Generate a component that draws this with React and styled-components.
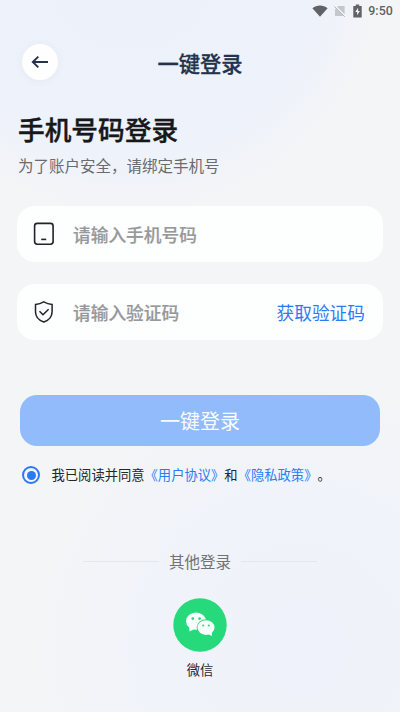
import React, { useState } from 'react'
import styled, { createGlobalStyle } from 'styled-components'

const GlobalStyle = createGlobalStyle`
    * {
        box-sizing: border-box;
    }

    body {
        margin: 0;
        font-family: 'Noto Sans CJK SC', sans-serif;
        text-spacing-trim: space-all;
    }

    button, input {
        border: 0;
        padding: 0;
        background: none;
        font-family: inherit;
    }
`

const Page = styled.main`
    height: 712px;
    overflow: hidden;
    display: flex;
    flex-direction: column;
    background:
        radial-gradient(circle at 130px -40px, #edf2fa 0, #eef2fa 200px, rgba(240, 243, 249, 0) 255px),
        radial-gradient(circle at 300px 650px, #eff2fa 0, #f0f3fa 150px, rgba(241, 243, 249, 0) 270px),
        #f4f5f7;
`

const StatusBar = styled.div`
    height: 22px;
    padding-right: 7px;
    display: flex;
    align-items: center;
    justify-content: flex-end;
`

const StatusIcon = styled.svg`
    display: block;
    margin-right: ${props => props.$gap}px;
`

const Clock = styled.span`
    font: 500 12.4px/22px Roboto, sans-serif;
    letter-spacing: 0.1px;
    color: #606266;
`

const Header = styled.header`
    height: 84px;
    padding: 0 22px;
    display: grid;
    grid-template-columns: 36px 1fr 36px;
    align-items: center;
`

const BackButton = styled.button`
    width: 36px;
    height: 36px;
    margin-bottom: 5px;
    border-radius: 50%;
    display: flex;
    align-items: center;
    justify-content: center;
    background: #fefefe;
    box-shadow: 0 1px 8px rgba(90, 90, 80, 0.06);
`

const Title = styled.h1`
    margin: 0 0 2px;
    text-align: center;
    font-size: 21.3px;
    font-weight: 500;
    line-height: 30px;
    color: #24324b;
    -webkit-text-stroke: 0.3px #24324b;
`

const Intro = styled.section`
    height: 99.5px;
    padding: 5px 18px 0;
`

const Heading = styled.h2`
    margin: 0;
    font-size: 26.7px;
    font-weight: 500;
    line-height: 36px;
    color: #17181a;
    -webkit-text-stroke: 0.4px #17181a;
`

const Hint = styled.p`
    margin: 8px 0 0;
    font-size: 15.5px;
    line-height: 20px;
    color: #696b70;
`

const Fields = styled.div`
    padding: 0 17px;
    display: flex;
    flex-direction: column;
    gap: 22px;
`

const Field = styled.label`
    height: 56px;
    padding: 0 18px 0 16px;
    display: flex;
    align-items: center;
    border-radius: 18px;
    background: #fdfefe;
`

const Input = styled.input`
    flex: 1;
    min-width: 0;
    height: 30px;
    margin-left: 18px;
    outline: none;
    font-size: 17.7px;
    font-weight: 500;
    color: #222;

    &::placeholder {
        color: #97989b;
        opacity: 1;
        -webkit-text-stroke: 0.2px #97989b;
    }
`

const CodeButton = styled.button`
    font-size: 17.7px;
    line-height: 26px;
    color: #2b7cf3;
`

const LoginButton = styled.button`
    height: 51px;
    margin: 55.5px 20px 0;
    border-radius: 17px;
    background: #91bbfb;
    color: #fafcff;
    font-size: 20px;
    line-height: 50px;
`

const Agreement = styled.div`
    height: 20px;
    margin: 19px 22px 0;
    display: flex;
    align-items: center;
    font-size: 13.3px;
    line-height: 20px;
    color: #25272b;
    white-space: nowrap;
`

const Radio = styled.button`
    width: 18px;
    height: 18px;
    margin: 0 11.5px 0 0;
    border: 2.5px solid #2b7af2;
    border-radius: 50%;
    display: flex;
    align-items: center;
    justify-content: center;

    &::after {
        content: '';
        width: 9px;
        height: 9px;
        border-radius: 50%;
        background: ${props => (props.$checked ? '#2b7af2' : 'transparent')};
    }
`

const Link = styled.span`
    color: #2b7cf3;
`

const Divider = styled.div`
    margin: 66px 83px 0;
    display: flex;
    align-items: center;
    gap: 10px;
    font-size: 15.5px;
    line-height: 20px;
    color: #707276;

    &::before,
    &::after {
        content: '';
        flex: 1;
        height: 1px;
        background: #e5e7ec;
    }
`

const WechatLogin = styled.button`
    align-self: center;
    margin-top: 26.5px;
    display: flex;
    flex-direction: column;
    align-items: center;
    gap: 8px;
    font-size: 13.3px;
    line-height: 20px;
    color: #25272b;
`

const WechatLogo = styled.svg`
    width: 54px;
    height: 54px;
    display: block;
`

const PhoneIcon = () => (
    <svg width="22" height="24" viewBox="0 0 22 24" fill="none" stroke="#222326" strokeWidth="1.6">
        <rect x="1.6" y="1.4" width="18.5" height="20.8" rx="2.6" />
        <path d="M8.2 17.4h5" />
    </svg>
)

const ShieldIcon = () => (
    <svg width="22" height="24" viewBox="0 0 22 24" fill="none" stroke="#222326" strokeWidth="1.5">
        <path d="M10.8 1.9C13.4 3.4 16 4.2 19.1 4.4V11.8C19.1 17 15.6 20.4 10.8 22C6 20.4 2.5 17 2.5 11.8V4.4C5.6 4.2 8.2 3.4 10.8 1.9Z" />
        <path d="M6.5 11.3L10 14.8L15.6 9.2" />
    </svg>
)

const StatusIcons = () => (
    <>
        <StatusIcon $gap={6} width="16" height="12" viewBox="0 0 16 12" fill="#606266">
            <path d="M.4 3.3C5-.3 11-.3 15.6 3.3L8 11.8Z" />
        </StatusIcon>
        <StatusIcon $gap={7} width="12" height="12" viewBox="0 0 12 12">
            <path d="M4.2 1H10.6V11H1V4.2Z" fill="#c5c7ca" />
            <path d="M.8 1L11.4 11.5" stroke="#f1f4f8" strokeWidth="2" />
            <path d="M.3 1.4L10.7 11.8" stroke="#b0b2b5" strokeWidth="1" />
        </StatusIcon>
        <StatusIcon $gap={6} width="9" height="14" viewBox="0 0 9 14">
            <path d="M.3 2H2.8V.6H6.2V2H8.7V13.4H.3Z" fill="#606266" />
            <path d="M5.1 3.7L2.2 8H4.1V11.2L6.9 6.9H5.1Z" fill="#f1f4f8" />
        </StatusIcon>
    </>
)

const WechatIcon = () => (
    <WechatLogo viewBox="0 0 54 54">
        <circle cx="27" cy="27" r="26.7" fill="#26d97b" />
        <g fill="#fcfffd">
            <ellipse cx="23" cy="23.2" rx="10" ry="8.6" />
            <path d="M16.2 28L16.4 33.6L22 30.8Z" />
        </g>
        <ellipse cx="33" cy="29.6" rx="9.4" ry="8.3" fill="#26d97b" />
        <g fill="#fcfffd">
            <ellipse cx="33" cy="29.6" rx="8.5" ry="7.4" />
            <path d="M34.2 35.8L39 38L38.8 33.6Z" />
        </g>
        <g fill="#26d97b">
            <circle cx="19.8" cy="20.6" r="1.4" />
            <circle cx="26.6" cy="20.6" r="1.4" />
            <circle cx="30.2" cy="27.5" r="1.1" />
            <circle cx="35.8" cy="27.5" r="1.1" />
        </g>
    </WechatLogo>
)

export default function App() {
    const [agreed, setAgreed] = useState(true)

    return (
        <Page>
            <GlobalStyle />
            <StatusBar>
                <StatusIcons />
                <Clock>9:50</Clock>
            </StatusBar>
            <Header>
                <BackButton aria-label="返回">
                    <svg width="18" height="14" viewBox="0 0 18 14" fill="none" stroke="#26324a" strokeWidth="1.9">
                        <path d="M17 7H1.8M7.3 1.6L1.8 7L7.3 12.4" />
                    </svg>
                </BackButton>
                <Title>一键登录</Title>
            </Header>
            <Intro>
                <Heading>手机号码登录</Heading>
                <Hint>为了账户安全，请绑定手机号</Hint>
            </Intro>
            <Fields>
                <Field>
                    <PhoneIcon />
                    <Input type="tel" placeholder="请输入手机号码" />
                </Field>
                <Field>
                    <ShieldIcon />
                    <Input placeholder="请输入验证码" />
                    <CodeButton>获取验证码</CodeButton>
                </Field>
            </Fields>
            <LoginButton>一键登录</LoginButton>
            <Agreement>
                <Radio
                    aria-label="同意"
                    $checked={agreed}
                    onClick={() => setAgreed(!agreed)}
                />
                <span>
                    我已阅读并同意<Link>《用户协议》</Link>和
                    <Link>《隐私政策》</Link>。
                </span>
            </Agreement>
            <Divider>其他登录</Divider>
            <WechatLogin>
                <WechatIcon />
                微信
            </WechatLogin>
        </Page>
    )
}
